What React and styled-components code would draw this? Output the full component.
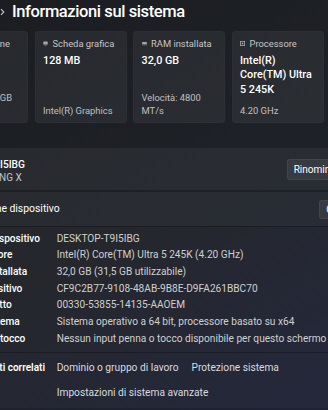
import React from "react";
import styled, { createGlobalStyle } from "styled-components";

const Global = createGlobalStyle`
  html, body { margin: 0; padding: 0; }
  body {
    width: 328px;
    height: 410px;
    overflow: hidden;
    background: linear-gradient(150deg, #1b1d21 0%, #1e2127 50%, #1d2235 100%);
    font-family: Roboto, "Noto Sans", sans-serif;
    color: #ffffff;
    -webkit-font-smoothing: antialiased;
  }
`;

const Page = styled.main`
  width: 473px;
  margin-left: -72px;
  display: flex;
  flex-direction: column;
`;

const Header = styled.header`
  height: 24px;
  margin-bottom: 6.5px;
  display: flex;
  align-items: center;
`;

const Parent = styled.span`
  flex: 0 0 64px;
  margin-right: 8px;
  font-size: 16.5px;
  font-weight: 500;
  color: #c8c8c8;
  text-align: right;
  white-space: nowrap;
  overflow: hidden;
`;

const Chevron = styled.svg`
  flex: 0 0 5px;
  margin-right: 7px;
`;

const Title = styled.h1`
  margin: 0;
  font-size: 16.5px;
  font-weight: 500;
  letter-spacing: -0.4px;
  line-height: 24px;
  white-space: nowrap;
`;

const CardRow = styled.section`
  display: flex;
  gap: 6.5px;
  padding-left: 8px;
`;

const Card = styled.div`
  flex: 0 0 92px;
  height: 92px;
  box-sizing: border-box;
  padding: 5px 6px 5px 7.5px;
  border-radius: 4px;
  background: rgba(255, 255, 255, 0.055);
  border: 1px solid rgba(255, 255, 255, 0.025);
  display: flex;
  flex-direction: column;
  overflow: hidden;
`;

const CardLabel = styled.div`
  display: flex;
  align-items: center;
  gap: 4.5px;
  height: 14px;
  font-size: 9.4px;
  color: #c6c6c6;
  white-space: nowrap;
`;

const CardValue = styled.div`
  margin-top: 3px;
  font-size: 10.8px;
  font-weight: 500;
  line-height: 14.5px;
  white-space: pre-line;
`;

const CardFoot = styled.div`
  margin-top: auto;
  font-size: 9.4px;
  line-height: 13px;
  color: #c0c0c0;
  white-space: pre-line;
`;

const DeviceCard = styled.section`
  margin-top: 25.5px;
  height: 42px;
  box-sizing: border-box;
  padding: 0 10px 0 12px;
  border-radius: 4px;
  background: rgba(255, 255, 255, 0.05);
  display: flex;
  align-items: center;
`;

const DeviceText = styled.div`
  display: flex;
  flex-direction: column;
  margin-top: 4px;
  flex: 1;
`;

const DeviceName = styled.span`
  font-size: 10.2px;
  font-weight: 500;
  line-height: 13px;
`;

const DeviceModel = styled.span`
  font-size: 10px;
  line-height: 13px;
  color: #c4c4c4;
`;

const Button = styled.button`
  height: ${(p) => p.$h || 21}px;
  padding: 0 6px;
  border-radius: 3px;
  border: 1px solid rgba(255, 255, 255, 0.06);
  background: #373a40;
  color: #ffffff;
  font-family: inherit;
  font-size: 10px;
  white-space: nowrap;
`;

const Expander = styled.section`
  margin-top: 2px;
  display: flex;
  flex-direction: column;
`;

const ExpanderHeader = styled.div`
  height: 34px;
  box-sizing: border-box;
  padding: 0 10px 0 8px;
  border-radius: 4px 4px 0 0;
  background: rgba(255, 255, 255, 0.05);
  display: flex;
  align-items: center;
`;

const ExpanderTitle = styled.span`
  margin-left: 11px;
  flex: 1;
  font-size: 10.4px;
  line-height: 14px;
  white-space: nowrap;
`;

const HeaderChevron = styled.svg`
  margin-left: 22px;
`;

const SpecList = styled.dl`
  margin: 0;
  padding: 3.5px 10px 5px 33px;
  border-top: 1px solid rgba(0, 0, 0, 0.28);
  background: rgba(255, 255, 255, 0.03);
  display: grid;
  grid-template-columns: 95.7px 1fr;
  font-size: 10.15px;
  line-height: 16.67px;
`;

const SpecLabel = styled.dt`
  color: #ffffff;
  font-weight: 500;
  white-space: nowrap;
`;

const SpecValue = styled.dd`
  margin: 0;
  color: #d0d0d0;
  white-space: nowrap;
`;

const Related = styled.div`
  padding: 5px 10px 5px 8px;
  border-top: 1px solid rgba(0, 0, 0, 0.28);
  border-radius: 0 0 4px 4px;
  background: rgba(255, 255, 255, 0.03);
  display: flex;
  align-items: flex-start;
`;

const RelatedLabel = styled.span`
  flex: 0 0 109px;
  text-align: right;
  font-size: 10px;
  font-weight: 600;
  line-height: 20px;
  white-space: nowrap;
  overflow: hidden;
  direction: rtl;
`;

const Links = styled.div`
  margin-left: 11.7px;
  flex: 1;
  display: flex;
  flex-wrap: wrap;
  column-gap: 13px;
  row-gap: 5px;
`;

const Link = styled.a`
  font-size: 10.2px;
  line-height: 20px;
  color: #d9dbe0;
  text-decoration: none;
  white-space: nowrap;
`;

const GpuIcon = () => (
  <svg width="5" height="5" viewBox="0 0 5 5">
    <rect x="0.3" y="0.5" width="4.4" height="3" rx="0.3" fill="#a6a6a6" />
    <rect x="1.5" y="3.8" width="2" height="0.7" fill="#a6a6a6" />
  </svg>
);

const RamIcon = () => (
  <svg width="5" height="5" viewBox="0 0 5 5">
    <rect x="0.2" y="1" width="4.6" height="2.4" fill="#a6a6a6" />
    <rect x="0.6" y="3.6" width="0.6" height="0.8" fill="#a6a6a6" />
    <rect x="2.2" y="3.6" width="0.6" height="0.8" fill="#a6a6a6" />
    <rect x="3.8" y="3.6" width="0.6" height="0.8" fill="#a6a6a6" />
  </svg>
);

const CpuIcon = () => (
  <svg width="5" height="5" viewBox="0 0 5 5">
    <rect x="0.4" y="0.4" width="4.2" height="4.2" fill="none" stroke="#a6a6a6" strokeWidth="0.8" />
    <rect x="1.7" y="1.7" width="1.6" height="1.6" fill="#a6a6a6" />
  </svg>
);

const DiskIcon = () => (
  <svg width="5" height="5" viewBox="0 0 5 5">
    <rect x="0.3" y="1" width="4.4" height="3" rx="0.5" fill="#a6a6a6" />
  </svg>
);

const cards = [
  { icon: <DiskIcon />, label: "Archiviazione", value: "953 GB", foot: "In uso: 311,5 GB\nsu 953 GB" },
  { icon: <GpuIcon />, label: "Scheda grafica", value: "128 MB", foot: "Intel(R) Graphics" },
  { icon: <RamIcon />, label: "RAM installata", value: "32,0 GB", foot: "Velocità: 4800\nMT/s" },
  { icon: <CpuIcon />, label: "Processore", value: "Intel(R)\nCore(TM) Ultra\n5 245K", foot: "4.20 GHz" },
  { icon: <GpuIcon />, label: "Scheda grafica", value: "Intel(R) Graphics", foot: "" },
];

const specs = [
  ["Nome dispositivo", "DESKTOP-T9I5IBG"],
  ["Processore", "Intel(R) Core(TM) Ultra 5 245K (4.20 GHz)"],
  ["RAM installata", "32,0 GB (31,5 GB utilizzabile)"],
  ["ID dispositivo", "CF9C2B77-9108-48AB-9B8E-D9FA261BBC70"],
  ["ID prodotto", "00330-53855-14135-AAOEM"],
  ["Tipo sistema", "Sistema operativo a 64 bit, processore basato su x64"],
  ["Penna e tocco", "Nessun input penna o tocco disponibile per questo schermo"],
];

export default function App() {
  return (
    <>
      <Global />
      <Page>
        <Header>
          <Parent>Sistema</Parent>
          <Chevron width="5" height="8" viewBox="0 0 5 8">
            <path d="M1 1.2 L3.8 4 L1 6.8" fill="none" stroke="#c8c8c8" strokeWidth="1.1" />
          </Chevron>
          <Title>Informazioni sul sistema</Title>
        </Header>

        <CardRow>
          {cards.map((c, i) => (
            <Card key={i}>
              <CardLabel>
                {c.icon}
                {c.label}
              </CardLabel>
              <CardValue>{c.value}</CardValue>
              <CardFoot>{c.foot}</CardFoot>
            </Card>
          ))}
        </CardRow>

        <DeviceCard>
          <DeviceText>
            <DeviceName>DESKTOP-T9I5IBG</DeviceName>
            <DeviceModel>B860M GAMING X</DeviceModel>
          </DeviceText>
          <Button>Rinomina questo PC</Button>
        </DeviceCard>

        <Expander>
          <ExpanderHeader>
            <svg width="12" height="12" viewBox="0 0 12 12">
              <circle cx="6" cy="6" r="5" fill="none" stroke="#cfcfcf" strokeWidth="1" />
              <path d="M6 5.2 V8.8" stroke="#cfcfcf" strokeWidth="1" />
              <circle cx="6" cy="3.6" r="0.6" fill="#cfcfcf" />
            </svg>
            <ExpanderTitle>Specifiche dispositivo</ExpanderTitle>
            <Button $h={19}>Copia</Button>
            <HeaderChevron width="10" height="6" viewBox="0 0 10 6">
              <path d="M1 5 L5 1 L9 5" fill="none" stroke="#cfcfcf" strokeWidth="1.1" />
            </HeaderChevron>
          </ExpanderHeader>
          <SpecList>
            {specs.map(([k, v]) => (
              <React.Fragment key={k}>
                <SpecLabel>{k}</SpecLabel>
                <SpecValue>{v}</SpecValue>
              </React.Fragment>
            ))}
          </SpecList>
          <Related>
            <RelatedLabel>Collegamenti correlati</RelatedLabel>
            <Links>
              <Link href="#">Dominio o gruppo di lavoro</Link>
              <Link href="#">Protezione sistema</Link>
              <Link href="#">Impostazioni di sistema avanzate</Link>
            </Links>
          </Related>
        </Expander>
      </Page>
    </>
  );
}
